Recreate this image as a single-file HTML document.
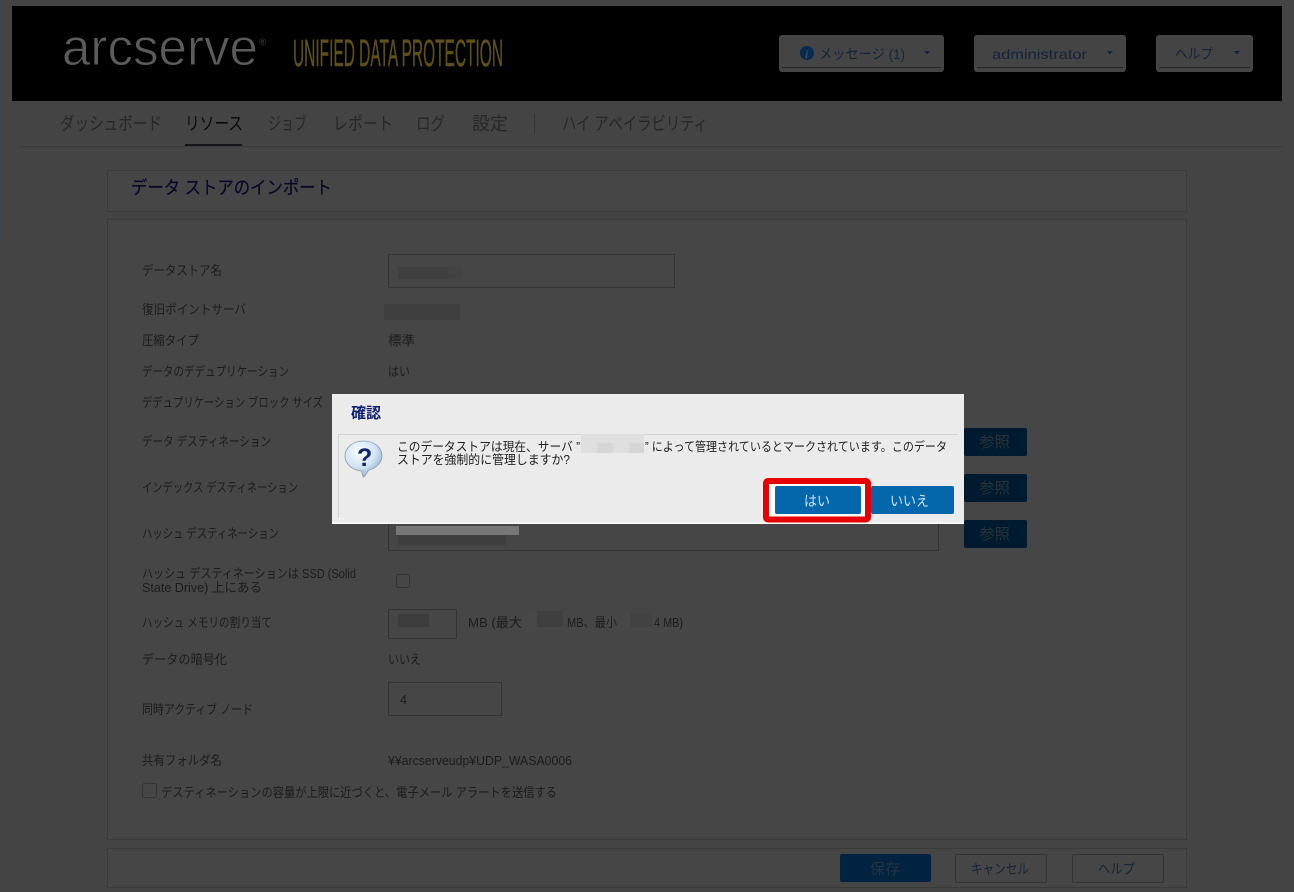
<!DOCTYPE html>
<html lang="ja"><head><meta charset="utf-8"><title>データ ストアのインポート</title>
<style>
html,body{margin:0;padding:0;background:#444;width:1294px;height:892px;overflow:hidden}
svg{display:block;position:absolute;left:0;top:0}
text{font-family:"Liberation Sans","Noto Sans CJK JP",sans-serif}
.l{font-size:13px;fill:#1c1c1c}
.n{font-size:18px;fill:#272727}
.b{font-size:14px;fill:#13233c}
</style></head><body>
<svg width="1294" height="892" viewBox="0 0 1294 892" xmlns="http://www.w3.org/2000/svg">
<defs>
<radialGradient id="q" cx="0.4" cy="0.3" r="0.8"><stop offset="0" stop-color="#ffffff"/><stop offset="0.55" stop-color="#cfe3f3"/><stop offset="1" stop-color="#7f9db8"/></radialGradient>
</defs>
<rect width="1294" height="892" fill="#444"/>
<rect x="0" y="0" width="1" height="240" fill="#3a4650"/>
<rect x="12" y="6" width="1270" height="95" fill="#000"/>

<text x="62" y="65" textLength="196" lengthAdjust="spacingAndGlyphs" style="font-size:52px;fill:#5c5c5c;stroke:#000;stroke-width:.9px">arcserve</text>
<text x="259" y="45" textLength="7" lengthAdjust="spacingAndGlyphs" style="font-size:9px;fill:#444">®</text>
<text x="293" y="66" textLength="210" lengthAdjust="spacingAndGlyphs" style="font-size:38px;fill:#5f5018;stroke:#5f5018;stroke-width:.5px">UNIFIED DATA PROTECTION</text>

<g fill="#444">
<rect x="779" y="35" width="165" height="37" rx="3"/>
<rect x="974" y="35" width="152" height="37" rx="3"/>
<rect x="1156" y="35" width="97" height="37" rx="3"/>
</g>
<g fill="#222">
<rect x="782" y="67" width="159" height="1"/>
<rect x="977" y="67" width="146" height="1"/>
<rect x="1159" y="67" width="91" height="1"/>
</g>
<circle cx="807" cy="53" r="7" fill="#062a50"/>
<text x="805" y="58" style="font-size:12px;font-weight:bold;font-style:italic;fill:#404a5a;font-family:'Liberation Serif',serif">i</text>
<text class="b" x="819" y="59" textLength="86" lengthAdjust="spacingAndGlyphs">メッセージ (1)</text>
<text class="b" x="992" y="59" textLength="95" lengthAdjust="spacingAndGlyphs">administrator</text>
<text class="b" x="1175" y="59" textLength="38" lengthAdjust="spacingAndGlyphs">ヘルプ</text>
<g fill="#13233c">
<path d="M924 51h6l-3 3.500z"/><path d="M1107 51h6l-3 3.500z"/><path d="M1234 51h6l-3 3.500z"/>
</g>

<text class="n" x="60" y="130" textLength="102" lengthAdjust="spacingAndGlyphs">ダッシュボード</text>
<text class="n" x="185" y="130" textLength="58" lengthAdjust="spacingAndGlyphs" style="fill:#0a0a0a">リソース</text>
<text class="n" x="268" y="130" textLength="39" lengthAdjust="spacingAndGlyphs">ジョブ</text>
<text class="n" x="333" y="130" textLength="60" lengthAdjust="spacingAndGlyphs">レポート</text>
<text class="n" x="416" y="130" textLength="29" lengthAdjust="spacingAndGlyphs">ログ</text>
<text class="n" x="472" y="130" textLength="36" lengthAdjust="spacingAndGlyphs">設定</text>
<rect x="534" y="114" width="1" height="19" fill="#333"/>
<text class="n" x="562" y="130" textLength="146" lengthAdjust="spacingAndGlyphs">ハイ アベイラビリティ</text>
<rect x="18" y="146" width="1264" height="1" fill="#3a3a3a"/>
<rect x="185" y="144" width="57" height="2" fill="#16161f"/>

<g fill="#464646" stroke="#3a3a3a">
<rect x="107.500" y="170.500" width="1079" height="41"/>
<rect x="107.500" y="219.500" width="1079" height="620"/>
<rect x="107.500" y="848.500" width="1079" height="39"/>
</g>
<text x="131" y="194" textLength="201" lengthAdjust="spacingAndGlyphs" style="font-size:18px;fill:#08082a;stroke:#08082a;stroke-width:.25px">データ ストアのインポート</text>

<text class="l" x="142" y="275" textLength="80" lengthAdjust="spacingAndGlyphs">データストア名</text>
<text class="l" x="142" y="314" textLength="104" lengthAdjust="spacingAndGlyphs">復旧ポイントサーバ</text>
<text class="l" x="142" y="345" textLength="57" lengthAdjust="spacingAndGlyphs">圧縮タイプ</text>
<text class="l" x="142" y="376" textLength="147" lengthAdjust="spacingAndGlyphs">データのデデュプリケーション</text>
<text class="l" x="142" y="407" textLength="181" lengthAdjust="spacingAndGlyphs">デデュプリケーション ブロック サイズ</text>
<text class="l" x="142" y="446" textLength="129" lengthAdjust="spacingAndGlyphs">データ デスティネーション</text>
<text class="l" x="142" y="492" textLength="156" lengthAdjust="spacingAndGlyphs">インデックス デスティネーション</text>
<text class="l" x="142" y="538" textLength="137" lengthAdjust="spacingAndGlyphs">ハッシュ デスティネーション</text>
<text class="l" x="142" y="578" textLength="214" lengthAdjust="spacingAndGlyphs">ハッシュ デスティネーションは SSD (Solid</text>
<text class="l" x="142" y="592" textLength="120" lengthAdjust="spacingAndGlyphs">State Drive) 上にある</text>
<text class="l" x="142" y="627" textLength="130" lengthAdjust="spacingAndGlyphs">ハッシュ メモリの割り当て</text>
<text class="l" x="142" y="664" textLength="85" lengthAdjust="spacingAndGlyphs">データの暗号化</text>
<text class="l" x="142" y="714" textLength="111" lengthAdjust="spacingAndGlyphs">同時アクティブ ノード</text>
<text class="l" x="142" y="765" textLength="80" lengthAdjust="spacingAndGlyphs">共有フォルダ名</text>
<text class="l" x="161" y="797" textLength="396" lengthAdjust="spacingAndGlyphs">デスティネーションの容量が上限に近づくと、電子メール アラートを送信する</text>

<text class="l" x="388" y="345" textLength="27" lengthAdjust="spacingAndGlyphs">標準</text>
<text class="l" x="388" y="376" textLength="22" lengthAdjust="spacingAndGlyphs">はい</text>
<text class="l" x="388" y="664" textLength="33" lengthAdjust="spacingAndGlyphs">いいえ</text>
<text class="l" x="388" y="765" textLength="184" lengthAdjust="spacingAndGlyphs">¥¥arcserveudp¥UDP_WASA0006</text>

<g fill="none" stroke="#333">
<rect x="388.500" y="254.500" width="286" height="33"/>
<rect x="388.500" y="516.500" width="550" height="34"/>
<rect x="388.500" y="609.500" width="68" height="29"/>
<rect x="388.500" y="682.500" width="113" height="33"/>
<rect x="396.500" y="574.500" width="13" height="13" rx="2"/>
<rect x="142.500" y="783.500" width="14" height="14" rx="2"/>
</g>
<rect x="398" y="267" width="50" height="12" fill="#3f3f3f"/>
<rect x="448" y="267" width="14" height="12" fill="#434343"/>
<rect x="384" y="304" width="76" height="16" fill="#3f3f3f"/>
<rect x="396" y="526" width="123" height="9" fill="#777"/>
<rect x="398" y="535" width="108" height="10" fill="#3e3e3e"/>
<rect x="398" y="614" width="31" height="13" fill="#3c3c3c"/>
<text class="l" x="468" y="627" textLength="54" lengthAdjust="spacingAndGlyphs">MB (最大</text>
<rect x="523" y="611" width="41" height="20" fill="#474747"/>
<rect x="537" y="611" width="26" height="16" fill="#3f3f3f"/>
<text class="l" x="567" y="627" textLength="50" lengthAdjust="spacingAndGlyphs">MB、最小</text>
<rect x="622" y="613" width="32" height="18" fill="#474747"/>
<rect x="630" y="613" width="22" height="14" fill="#424242"/>
<text class="l" x="654" y="627" textLength="29" lengthAdjust="spacingAndGlyphs">4 MB)</text>
<text class="l" x="400" y="704" textLength="7" lengthAdjust="spacingAndGlyphs">4</text>

<g fill="#001b30">
<rect x="964" y="428" width="63" height="28" rx="2"/>
<rect x="964" y="474" width="63" height="28" rx="2"/>
<rect x="964" y="520" width="63" height="28" rx="2"/>
<rect x="840" y="854" width="91" height="28" rx="2" fill="#012340"/>
</g>
<text x="979" y="447" textLength="31" lengthAdjust="spacingAndGlyphs" style="font-size:15px;fill:#2a3238">参照</text>
<text x="979" y="493" textLength="31" lengthAdjust="spacingAndGlyphs" style="font-size:15px;fill:#2a3238">参照</text>
<text x="979" y="539" textLength="31" lengthAdjust="spacingAndGlyphs" style="font-size:15px;fill:#2a3238">参照</text>
<text x="870" y="874" textLength="30" lengthAdjust="spacingAndGlyphs" style="font-size:15px;fill:#24343f">保存</text>
<g fill="none" stroke="#343434">
<rect x="955.500" y="854.500" width="91" height="28" rx="1"/>
<rect x="1072.500" y="854.500" width="91" height="28" rx="1"/>
</g>
<text x="971" y="874" textLength="58" lengthAdjust="spacingAndGlyphs" style="font-size:14px;fill:#15243a">キャンセル</text>
<text x="1098" y="874" textLength="37" lengthAdjust="spacingAndGlyphs" style="font-size:14px;fill:#15243a">ヘルプ</text>

<rect x="332" y="394" width="632" height="130" fill="#ebebeb"/>
<path d="M338.500 518.500V434.500H958.500" fill="none" stroke="#d4d4d4"/>
<path d="M338.500 518.500H345" fill="none" stroke="#f6f6f6"/>
<rect x="332" y="522.500" width="632" height="1.500" fill="#fafafa"/>
<text x="351" y="418" textLength="30" lengthAdjust="spacingAndGlyphs" style="font-size:15px;font-weight:bold;fill:#0c1f72">確認</text>

<path d="M363.500 441c-10.500 0-18.500 6.500-18.500 15 0 8 7 14 15.500 14.800 1 .1 1.600 1 2 4.200.3 2 1.200 3 2.500 .9 1.500-2.200 2.300-4.600 4-5.800 7-2 13-7.500 13-14.100 0-8.500-8-15-18.500-15z" fill="url(#q)" stroke="#8aa0b4" stroke-width=".8"/>
<text x="357" y="466" style="font-size:25px;font-weight:bold;fill:#10256e">?</text>

<text x="397" y="451" textLength="183" lengthAdjust="spacingAndGlyphs" style="font-size:12.500px;fill:#222">このデータストアは現在、サーバ ”</text>
<rect x="581" y="434" width="63" height="19" fill="#dfdfdf"/>
<rect x="597" y="443" width="16" height="10" fill="#d6d6d6"/>
<rect x="629" y="443" width="15" height="10" fill="#d6d6d6"/>
<text x="645" y="451" textLength="302" lengthAdjust="spacingAndGlyphs" style="font-size:12.500px;fill:#222">” によって管理されているとマークされています。このデータ</text>
<text x="397" y="464" textLength="173" lengthAdjust="spacingAndGlyphs" style="font-size:12.500px;fill:#222">ストアを強制的に管理しますか?</text>

<rect x="871" y="486" width="83" height="28" rx="2" fill="#0467ac"/>
<text x="890" y="506" textLength="39" lengthAdjust="spacingAndGlyphs" style="font-size:14px;fill:#cfe4f3">いいえ</text>
<rect x="766" y="481" width="102" height="38.500" rx="2" fill="#fff" stroke="#e60000" stroke-width="6"/>
<rect x="775" y="486" width="86" height="28" rx="2" fill="#0467ac"/>
<text x="804" y="506" textLength="26" lengthAdjust="spacingAndGlyphs" style="font-size:14px;fill:#cfe4f3">はい</text>
</svg>
</body></html>
